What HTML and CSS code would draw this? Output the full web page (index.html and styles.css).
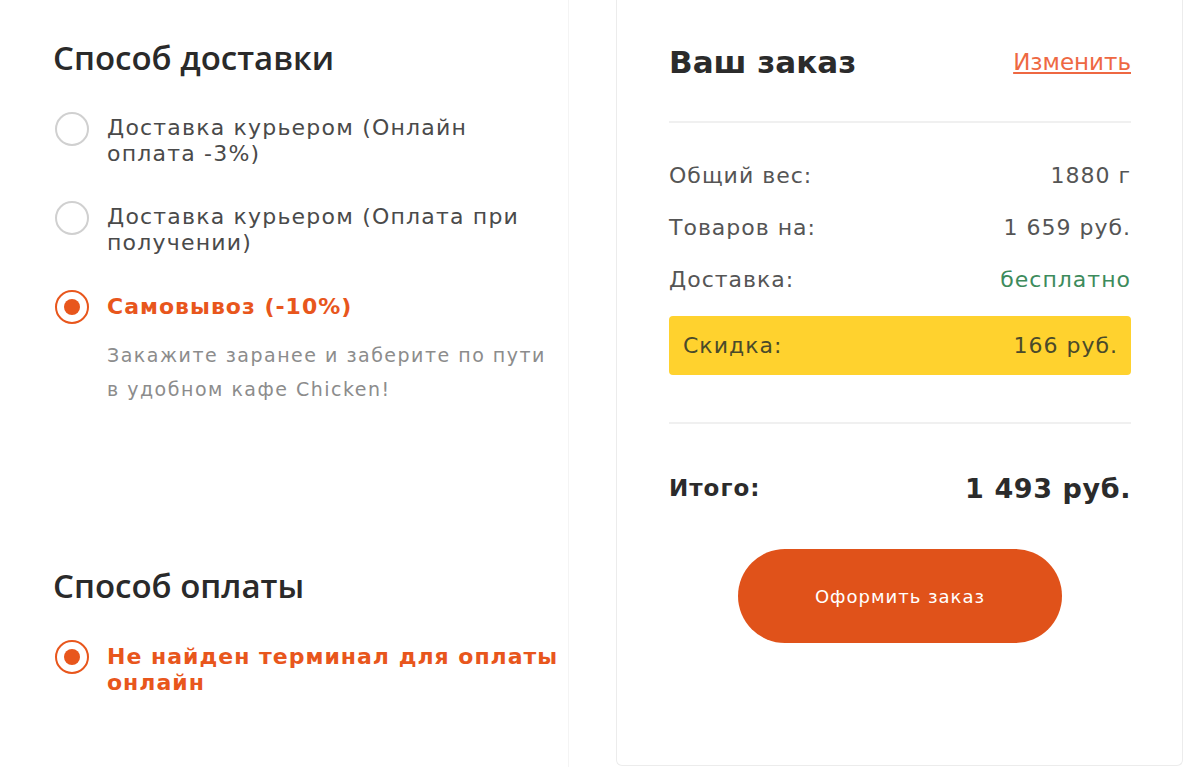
FILE: index.html
```html
<!DOCTYPE html>
<html lang="ru">
<head>
    <meta charset="UTF-8">
    <meta name="viewport" content="width=device-width, initial-scale=1.0">
    <title>Оформление заказа</title>
    <link rel="stylesheet" href="styles.css">
</head>
<body>
    <div class="checkout">
        <div class="options">
            <h2 class="section-title">Способ доставки</h2>

            <div class="option">
                <span class="radio"></span>
                <div class="option-text">Доставка курьером (Онлайн оплата -3%)</div>
            </div>
            <div class="option">
                <span class="radio"></span>
                <div class="option-text">Доставка курьером (Оплата при получении)</div>
            </div>
            <div class="option selected">
                <span class="radio"></span>
                <div class="option-text">
                    Самовывоз (-10%)
                    <p class="option-note">Закажите заранее и заберите по пути в удобном кафе Chicken!</p>
                </div>
            </div>

            <h2 class="section-title payment-title">Способ оплаты</h2>

            <div class="option selected">
                <span class="radio"></span>
                <div class="option-text">Не найден терминал для оплаты онлайн</div>
            </div>
        </div>

        <div class="summary">
            <div class="summary-head">
                <h3>Ваш заказ</h3>
                <a href="#" class="edit-link">Изменить</a>
            </div>
            <hr>
            <div class="summary-row">
                <span>Общий вес:</span>
                <span>1880 г</span>
            </div>
            <div class="summary-row">
                <span>Товаров на:</span>
                <span>1 659 руб.</span>
            </div>
            <div class="summary-row">
                <span>Доставка:</span>
                <span class="free">бесплатно</span>
            </div>
            <div class="summary-row discount">
                <span>Скидка:</span>
                <span>166 руб.</span>
            </div>
            <hr class="total-line">
            <div class="summary-row total">
                <span>Итого:</span>
                <span class="total-sum">1 493 руб.</span>
            </div>
            <button class="order-btn">Оформить заказ</button>
        </div>
    </div>
</body>
</html>
```

FILE: styles.css
```css
body {
    margin: 0;
    background-color: #fff;
    font-family: "DejaVu Sans", sans-serif;
    color: #333;
}
.checkout {
    display: flex;
    align-items: flex-start;
    height: 767px;
    overflow: hidden;
}
.options {
    width: 513px;
    height: 767px;
    padding: 38px 0 0 55px;
    border-right: 1px solid #f4f4f4;
}
.section-title {
    margin: 0 0 34px -2px;
    font-family: "Open Sans", sans-serif;
    font-weight: 600;
    font-size: 33px;
    line-height: 40px;
    color: #2a2a2a;
}
.payment-title {
    margin-top: 160px;
}
.option {
    display: flex;
    align-items: flex-start;
    gap: 18px;
    margin-bottom: 34px;
}
.radio {
    flex: none;
    width: 30px;
    height: 30px;
    border: 2px solid #d0d0d0;
    border-radius: 50%;
    display: flex;
    align-items: center;
    justify-content: center;
}
.option-text {
    width: 440px;
    padding-top: 3px;
    font-size: 22px;
    line-height: 26px;
    letter-spacing: 1.2px;
    color: #4a4a4a;
}
.selected .radio {
    border-color: #e8561c;
}
.selected .radio::after {
    content: "";
    width: 16px;
    height: 16px;
    border-radius: 50%;
    background-color: #e8561c;
}
.selected .option-text {
    width: 462px;
    padding-top: 4px;
    font-weight: bold;
    letter-spacing: 1px;
    color: #e8561c;
}
.option-note {
    width: 442px;
    margin: 18px 0 0;
    font-weight: normal;
    font-size: 19px;
    line-height: 34px;
    letter-spacing: 1.5px;
    color: #8c8c8c;
}
.summary {
    width: 462px;
    height: 723px;
    margin-left: 47px;
    padding: 42px 51px 0 52px;
    border: 1px solid #ececec;
    border-top: none;
    border-radius: 0 0 6px 6px;
}
.summary-head {
    display: flex;
    justify-content: space-between;
    align-items: center;
    height: 40px;
}
.summary-head h3 {
    margin: 0;
    font-size: 31px;
    font-weight: bold;
    color: #2b2b2b;
}
.edit-link {
    font-size: 23px;
    color: #ee6842;
}
hr {
    margin: 39px 0 26px;
    border: none;
    border-top: 2px solid #f0f0f0;
}
.summary-row {
    display: flex;
    justify-content: space-between;
    align-items: center;
    height: 52px;
    font-size: 22px;
    letter-spacing: 1px;
    color: #555;
}
.free {
    color: #3d8b5c;
}
.discount {
    height: 59px;
    margin-top: 11px;
    padding: 0 13px 0 14px;
    background-color: #ffd22e;
    border-radius: 4px;
    color: #4a4a2a;
}
.total-line {
    margin: 47px 0 44px;
}
.total {
    height: 40px;
    font-size: 23px;
    font-weight: bold;
    color: #2b2b2b;
}
.total-sum {
    font-size: 27px;
    letter-spacing: 0.6px;
}
.order-btn {
    display: block;
    width: 324px;
    height: 94px;
    margin: 41px auto 0;
    border: none;
    border-radius: 47px;
    background-color: #e0521a;
    color: #fff;
    font-family: "DejaVu Sans", sans-serif;
    font-size: 18px;
    letter-spacing: 1px;
    cursor: pointer;
}
```
